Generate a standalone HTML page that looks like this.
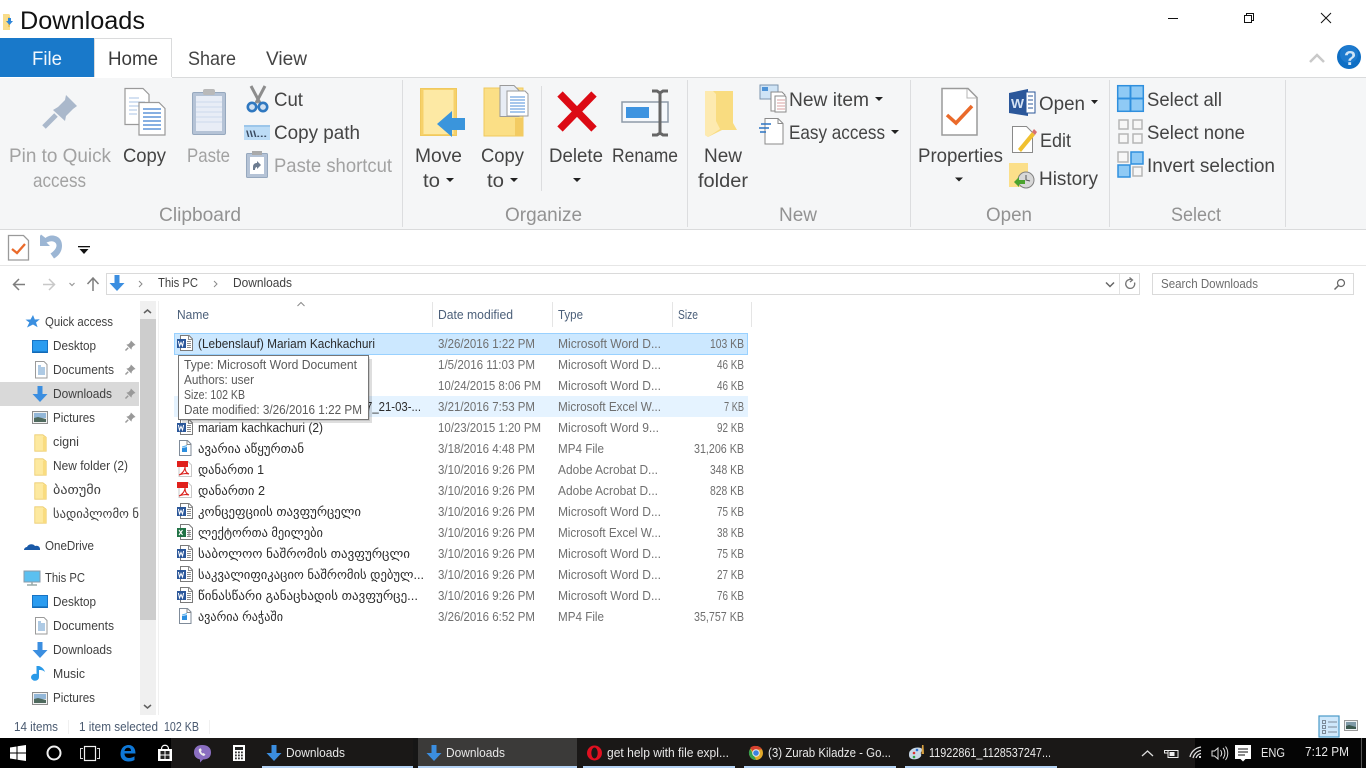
<!DOCTYPE html>
<html lang="en"><head><meta charset="utf-8"><title>Downloads</title>
<style>
html,body{margin:0;padding:0;background:#fff;overflow:hidden;width:1366px;height:768px}
svg{display:block;position:absolute;left:0;top:0}
text{font-family:"Liberation Sans","DejaVu Sans",sans-serif;white-space:pre}
.b{font-size:19.5px;fill:#444}
.d{font-size:19.5px;fill:#a2a2a2}
.g{font-size:19.5px;fill:#929292}
.s{font-size:12.5px;fill:#3f3f3f}
.n{font-size:12.5px;fill:#2c2c2c}
.m{font-size:12.5px;fill:#6f6f6f}
.h{font-size:12.5px;fill:#4c607a}
.t{font-size:12.5px;fill:#5a5a5a}
.w{font-size:12.5px;fill:#e8e8e8}
.st{font-size:12.5px;fill:#4a5a70}
</style></head><body>
<svg width="1366" height="768" viewBox="0 0 1366 768" xmlns="http://www.w3.org/2000/svg">
<defs>
<symbol id="word" viewBox="0 0 18 18" overflow="visible"><path d="M4.500 1.500H13l3.500 3.500v11.500h-12z" fill="#fff" stroke="#7a7a7a"/><path d="M12.500 1.500V5.500h4" fill="none" stroke="#8a8a8a"/><path d="M11 7.500h4M11 9.500h4M11 11.500h4M11 13.500h4" stroke="#8d8d8d"/><rect x="1" y="5" width="9" height="9" fill="#2b579a"/><path d="M2.400 7l1.100 5 1.500-3.600L6.500 12l1.100-5" fill="none" stroke="#fff" stroke-width="1"/></symbol>
<symbol id="excel" viewBox="0 0 18 18" overflow="visible"><path d="M4.500 1.500H13l3.500 3.500v11.500h-12z" fill="#fff" stroke="#7a7a7a"/><path d="M11 7.500h4M11 9.500h4M11 11.500h4M11 13.500h4M13 7v7" stroke="#8d8d8d"/><rect x="1" y="5" width="9" height="9" fill="#217346"/><path d="M3 7l3.500 5M6.500 7L3 12" stroke="#fff" stroke-width="1.100"/></symbol>
<symbol id="mp4" viewBox="0 0 18 18" overflow="visible"><path d="M3.500 1.500H11.500l3.500 3.500v11.500H3.500z" fill="#fff" stroke="#7f8b99"/><path d="M11 1.500V5.500h4" fill="none" stroke="#8a8a8a"/><path d="M6 9l5-1v5H6z" fill="#2c8fe0"/><path d="M6 7.500l5-1.500v1.200L6 8.500z" fill="#5ab0ee"/></symbol>
<symbol id="pdf" viewBox="0 0 18 18" overflow="visible"><path d="M3 1.500H12l3.500 3.500v11.500H3z" fill="#fff" stroke="#c8c8c8"/><rect x="1" y="1" width="11" height="6" fill="#e0201c"/><path d="M9 7c0 3-3 7-6 8 3-1 6-2 10-1-3-1-4-4-4-7z" fill="none" stroke="#d9201c" stroke-width="1.100"/></symbol>
<symbol id="folder" viewBox="0 0 18 22" overflow="visible"><path d="M2 1H12l4 3v17H2z" fill="#fde9a0" stroke="#eccb6c" stroke-width="1"/><path d="M12 3l4 1v17h-4z" fill="#f9dc80"/></symbol>
<symbol id="desk" viewBox="0 0 16 14" overflow="visible"><rect x=".5" y=".5" width="15" height="12" fill="#2a9cf0" stroke="#1773c4"/><path d="M1 11.500h14v1H1z" fill="#0c5fa8"/></symbol>
<symbol id="docs" viewBox="0 0 16 18" overflow="visible"><path d="M2.500 .5H11l3 3V17H2.500z" fill="#fff" stroke="#9a9a9a"/><path d="M5 5h3M5 7h7M5 9h7M5 11h7M5 13h7" stroke="#5d95c8"/></symbol>
<symbol id="dl" viewBox="0 0 16 16" overflow="visible"><path d="M5.500 0h5v8h5L8 16 .5 8h5z" fill="#3b8ee0"/></symbol>
<symbol id="pics" viewBox="0 0 16 14" overflow="visible"><rect x=".5" y=".5" width="15" height="12" fill="#f2f2f2" stroke="#8d8d8d"/><rect x="2" y="2" width="12" height="5" fill="#93b7d8"/><path d="M2 7l4-1 8 2v3H2z" fill="#4f6a5e"/></symbol>
<symbol id="pin" viewBox="0 0 12 12" overflow="visible"><path d="M6.500 .5l5 5-2 .7-2 2-.5 2.300L1.500 5l2.300-.5 2-2z" fill="#999"/><path d="M3.500 8.500L.5 11.500" stroke="#999" stroke-width="1.600"/></symbol>
</defs>

<!-- title bar -->
<rect width="1366" height="768" fill="#fff"/>
<g><path d="M3 14h6l1 1v15H3z" fill="#f8dc8a"/><path d="M8 17h2v10H8z" fill="#f0c65a"/><path d="M8 18h3v3h2l-3.500 4L6 21h2z" fill="#2f86d8"/></g>
<text x="20" y="29" font-size="25" fill="#111" textLength="125" lengthAdjust="spacingAndGlyphs">Downloads</text>
<path d="M1168 18.500h10" stroke="#111" stroke-width="1"/>
<path d="M1244.500 15.500h7v7h-7zM1246.500 15V13.500h7v7H1252" fill="none" stroke="#111"/>
<path d="M1321 13l10 10M1331 13l-10 10" stroke="#111" stroke-width="1"/>

<!-- tabs -->
<rect x="0" y="38" width="94" height="39" fill="#1979ca"/>
<path d="M94.500 77V38.500h77V77" fill="#fff" stroke="#dadbdc"/>
<text x="32" y="65" font-size="19.500" fill="#f2f7fc" textLength="30" lengthAdjust="spacingAndGlyphs">File</text>
<text x="108" y="65" font-size="19.500" fill="#3b3b3b" textLength="50" lengthAdjust="spacingAndGlyphs">Home</text>
<text x="188" y="65" font-size="19.500" fill="#444" textLength="48" lengthAdjust="spacingAndGlyphs">Share</text>
<text x="266" y="65" font-size="19.500" fill="#444" textLength="41" lengthAdjust="spacingAndGlyphs">View</text>
<path d="M1310 62l7-7 7 7" fill="none" stroke="#c9c9c9" stroke-width="2.500"/>
<circle cx="1349" cy="57" r="12" fill="#0e6ec4"/><circle cx="1349" cy="54" r="9" fill="#2b86d8" opacity=".5"/>
<text x="1344" y="65" font-size="20" font-weight="bold" fill="#cfe4f6">?</text>

<!-- ribbon -->
<rect x="0" y="78" width="1366" height="151" fill="#f5f6f7"/>
<rect x="172" y="77" width="1194" height="1" fill="#dadbdc"/>
<rect x="0" y="229" width="1366" height="1" fill="#dadbdc"/>
<g fill="#dcdddf"><rect x="402" y="80" width="1" height="147"/><rect x="687" y="80" width="1" height="147"/><rect x="910" y="80" width="1" height="147"/><rect x="1109" y="80" width="1" height="147"/><rect x="1285" y="80" width="1" height="147"/><rect x="541" y="86" width="1" height="105"/></g>

<!-- clipboard icons -->
<g><path d="M66 95l11 11-4 3-7 7-1 5-12-11 5-3 7-7z" fill="#aab8cb"/><path d="M56 115L44 127" stroke="#aab8cb" stroke-width="5"/></g>
<g><path d="M125 88.500h18l6 6v30h-24z" fill="#fff" stroke="#9a9a9a" stroke-width="1.200"/><path d="M129 98h10M129 102h16M129 106h16M129 110h8M129 114h8" stroke="#a9c3e4"/>
<path d="M139 102.500h20l6 6V135h-26z" fill="#fff" stroke="#9a9a9a" stroke-width="1.200"/><path d="M143 109h18M143 113h18M143 117h18M143 121h18M143 125h18M143 129h18" stroke="#3f7fd0" stroke-width="1.300"/></g>
<g><rect x="192.500" y="92.500" width="33" height="42" rx="1.500" fill="#b5c3d6" stroke="#96a8be"/><rect x="196" y="96" width="26" height="35" fill="#e8edf6"/><path d="M196 102h26M196 107h26M196 112h26M196 117h26M196 122h26" stroke="#cdd9ec"/><rect x="203" y="89" width="12" height="6" rx="2" fill="#b9b9b9"/></g>
<g><path d="M251 86l9 17M265 86l-9 17" stroke="#8d8d8d" stroke-width="3"/><circle cx="252" cy="107" r="4.200" fill="#cfe0f2" stroke="#2f78c0" stroke-width="2.600"/><circle cx="263" cy="107" r="4.200" fill="#cfe0f2" stroke="#2f78c0" stroke-width="2.600"/></g>
<rect x="244" y="125" width="26" height="15" fill="#bcdcf6"/><rect x="244" y="125" width="26" height="2" fill="#9cc6ea"/><text x="246" y="137" font-size="9" font-weight="bold" fill="#3a4a60" textLength="21" lengthAdjust="spacingAndGlyphs">\\\...</text>
<g><rect x="246.500" y="153.500" width="21" height="24" rx="1" fill="#b5c3d6" stroke="#96a8be"/><rect x="250" y="157" width="14" height="17" fill="#fff"/><rect x="252" y="151" width="10" height="4" fill="#aaa"/><path d="M253 170v-3c0-3 2-4 4-4v-2l4 4-4 4v-2c-1 0-2 1-2 3z" fill="#6d7c90"/></g>

<text class="d" x="9" y="162" textLength="102" lengthAdjust="spacingAndGlyphs">Pin to Quick</text>
<text class="d" x="33" y="187" textLength="53" lengthAdjust="spacingAndGlyphs">access</text>
<text class="b" x="123" y="162" textLength="43" lengthAdjust="spacingAndGlyphs">Copy</text>
<text class="d" x="187" y="162" textLength="43" lengthAdjust="spacingAndGlyphs">Paste</text>
<text class="b" x="274" y="106" textLength="29" lengthAdjust="spacingAndGlyphs">Cut</text>
<text class="b" x="274" y="139" textLength="86" lengthAdjust="spacingAndGlyphs">Copy path</text>
<text class="d" x="274" y="172" textLength="118" lengthAdjust="spacingAndGlyphs">Paste shortcut</text>
<text class="g" x="159" y="221" textLength="82" lengthAdjust="spacingAndGlyphs">Clipboard</text>

<!-- organize -->
<g><rect x="420.500" y="88.500" width="36" height="47" fill="#f6d16a" stroke="#f0c95e" stroke-width="1"/><rect x="423.500" y="90" width="30" height="44" fill="#fde9a4"/><path d="M465 118h-13v-7l-15 13 15 13v-7h13z" fill="#3a95dc"/></g>
<g><rect x="484" y="88" width="39" height="48" fill="#fbdf86" stroke="#f0c95e" stroke-width="1"/><rect x="515" y="118" width="8" height="18" fill="#f3cb62"/><path d="M500 85.500h14l5 5v26h-19z" fill="#e8edf5" stroke="#9a9a9a"/><path d="M507 91h18l3 3v22h-21z" fill="#fff" stroke="#9a9a9a"/><path d="M510 97h15M510 100h15M510 103h15M510 106h15M510 109h15M510 112h15" stroke="#4f8fd8"/></g>
<path d="M560 94l34 35M594 94l-34 35" stroke="#dc0a14" stroke-width="7.500"/>
<g><rect x="622" y="102" width="46" height="20" fill="#f5f8fc" stroke="#8e9aa8" stroke-width="1.500"/><rect x="626" y="107" width="23" height="11" fill="#3d93e0"/><path d="M652 91h5l3 2 3-2h5M660 93v40M652 135h5l3-2 3 2h5" fill="none" stroke="#666" stroke-width="3"/></g>
<text class="b" x="415" y="162" textLength="47" lengthAdjust="spacingAndGlyphs">Move</text>
<text class="b" x="423" y="187" textLength="17" lengthAdjust="spacingAndGlyphs">to</text>
<path d="M446 178h8l-4 4z" fill="#222"/>
<text class="b" x="481" y="162" textLength="43" lengthAdjust="spacingAndGlyphs">Copy</text>
<text class="b" x="487" y="187" textLength="17" lengthAdjust="spacingAndGlyphs">to</text>
<path d="M510 178h8l-4 4z" fill="#222"/>
<text class="b" x="549" y="162" textLength="54" lengthAdjust="spacingAndGlyphs">Delete</text>
<path d="M573 178h8l-4 4z" fill="#222"/>
<text class="b" x="612" y="162" textLength="66" lengthAdjust="spacingAndGlyphs">Rename</text>
<text class="g" x="505" y="221" textLength="77" lengthAdjust="spacingAndGlyphs">Organize</text>

<!-- new -->
<g><path d="M705 91h28v32l4 7H722l-14 7-3-2z" fill="#f9dc80"/><path d="M705 91h8l3 3v27l4 8-12 8-3-2z" fill="#fdeab0"/></g>
<g><rect x="760" y="85" width="18" height="14" fill="#cfe4f6" stroke="#7c94ad"/><rect x="762" y="87" width="6" height="4" fill="#4f93d6"/><path d="M771 92h11l3 3v16h-14z" fill="#fff" stroke="#8a8a8a"/><path d="M775 96h10l1 1v15h-11z" fill="#fff" stroke="#8a8a8a"/><path d="M777 100h8M777 103h8M777 106h8M777 109h8" stroke="#d8a0a0"/></g>
<g><path d="M765 118.500h13l5 5V144h-18z" fill="#fff" stroke="#8a8a8a"/><path d="M778 118.500v5h5" fill="none" stroke="#8a8a8a"/><path d="M761 124h10M759 128h10M760 132h6" stroke="#2b74c4" stroke-width="1.500"/></g>
<text class="b" x="704" y="162" textLength="38" lengthAdjust="spacingAndGlyphs">New</text>
<text class="b" x="698" y="187" textLength="50" lengthAdjust="spacingAndGlyphs">folder</text>
<text class="b" x="789" y="106" textLength="80" lengthAdjust="spacingAndGlyphs">New item</text>
<path d="M875 97h8l-4 4z" fill="#222"/>
<text class="b" x="789" y="139" textLength="96" lengthAdjust="spacingAndGlyphs">Easy access</text>
<path d="M891 130h8l-4 4z" fill="#222"/>
<text class="g" x="779" y="221" textLength="38" lengthAdjust="spacingAndGlyphs">New</text>

<!-- open -->
<g><path d="M942 88.500h26l9 9V135h-35z" fill="#fff" stroke="#9a9a9a" stroke-width="1.500"/><path d="M967 89v9h9" fill="none" stroke="#b5b5b5"/><path d="M947 115l9 8 16-17" fill="none" stroke="#ea6a2a" stroke-width="3.500"/></g>
<g><path d="M1009 93l19-4v27l-19-3z" fill="#2b579a"/><rect x="1026" y="92" width="9" height="21" fill="#fff" stroke="#2b579a"/><path d="M1028 96h5M1028 100h5M1028 104h5M1028 108h5" stroke="#2b579a"/><text x="1011" y="108" font-size="13" font-weight="bold" fill="#d4e2f4" textLength="13" lengthAdjust="spacingAndGlyphs">W</text></g>
<g><path d="M1012.500 126.500h14l6 6v20h-20z" fill="#fff" stroke="#8a8a8a"/><path d="M1018 149l14-17 3 3-14 17z" fill="#f0c030"/><path d="M1032 132l2-3 3 3-2 3z" fill="#d87070"/></g>
<g><rect x="1009" y="163" width="19" height="24" fill="#fbdf8a"/><circle cx="1026" cy="180" r="8" fill="#d8d8d8" stroke="#808080"/><path d="M1026 175v5l4 1" fill="none" stroke="#555"/><path d="M1014 182l5-5v3h6v4h-6v3z" fill="#4aa32e"/></g>
<text class="b" x="918" y="162" textLength="85" lengthAdjust="spacingAndGlyphs">Properties</text>
<path d="M955 177.500h8l-4 4z" fill="#222"/>
<text class="b" x="1039" y="110" textLength="46" lengthAdjust="spacingAndGlyphs">Open</text>
<path d="M1091 100h7l-3.500 4z" fill="#222"/>
<text class="b" x="1040" y="147" textLength="31" lengthAdjust="spacingAndGlyphs">Edit</text>
<text class="b" x="1039" y="185" textLength="59" lengthAdjust="spacingAndGlyphs">History</text>
<text class="g" x="986" y="221" textLength="46" lengthAdjust="spacingAndGlyphs">Open</text>

<!-- select -->
<g fill="#8fcaf5" stroke="#2f8fde" stroke-width="1.500"><rect x="1117.700" y="85.700" width="12.600" height="12.600"/><rect x="1130.700" y="85.700" width="12.600" height="12.600"/><rect x="1117.700" y="98.700" width="12.600" height="12.600"/><rect x="1130.700" y="98.700" width="12.600" height="12.600"/></g>
<g fill="#f7f7f7" stroke="#b5b5b5" stroke-width="1.500"><rect x="1119" y="120" width="9" height="9"/><rect x="1133" y="120" width="9" height="9"/><rect x="1119" y="134" width="9" height="9"/><rect x="1133" y="134" width="9" height="9"/></g>
<g stroke-width="1.500"><rect x="1118" y="152" width="10" height="10" fill="#f7f7f7" stroke="#b5b5b5"/><rect x="1131" y="152" width="12" height="12" fill="#8fcaf5" stroke="#2f8fde"/><rect x="1118" y="165" width="12" height="12" fill="#8fcaf5" stroke="#2f8fde"/><rect x="1133" y="167" width="9" height="9" fill="#f7f7f7" stroke="#b5b5b5"/></g>
<text class="b" x="1147" y="106" textLength="75" lengthAdjust="spacingAndGlyphs">Select all</text>
<text class="b" x="1147" y="139" textLength="98" lengthAdjust="spacingAndGlyphs">Select none</text>
<text class="b" x="1147" y="172" textLength="128" lengthAdjust="spacingAndGlyphs">Invert selection</text>
<text class="g" x="1171" y="221" textLength="50" lengthAdjust="spacingAndGlyphs">Select</text>

<!-- QAT -->
<g><path d="M8.500 235.500h15l5 5V260h-20z" fill="#fff" stroke="#9a9a9a" stroke-width="1.300"/><path d="M12 249l5 4 8-9" fill="none" stroke="#ea6a2a" stroke-width="2.300"/></g>
<path d="M40 236v10h10l-3.500-3.500 3-1c4-1 7 1 7 4 0 3-3 6-6 8l3.500 5c5-3 8-7 8-13 0-7-5-10-10-10-2.500 0-5 1-6.500 2.500L41 234.500z" fill="#9cb6d4"/>
<rect x="78" y="246" width="12" height="1.300" fill="#111"/><path d="M79.500 249h9l-4.500 5z" fill="#111"/>
<rect x="0" y="265" width="1366" height="1" fill="#e6e6e6"/>

<!-- address bar -->
<path d="M25 284.500H14M19 279l-5.500 5.500 5.500 5.500" fill="none" stroke="#7e7e7e" stroke-width="1.500"/>
<path d="M43 284.500h12M49 279l5.500 5.500-5.500 5.500" fill="none" stroke="#c8c8c8" stroke-width="1.500"/>
<path d="M69.500 283l2.500 2.500 2.500-2.500" fill="none" stroke="#999" stroke-width="1.200"/>
<path d="M93 291V278M87.500 284l5.500-6 5.500 6" fill="none" stroke="#7e7e7e" stroke-width="1.500"/>
<rect x="106.500" y="273.500" width="1033" height="21" fill="#fff" stroke="#dadada"/>
<rect x="1119" y="274" width="1" height="20" fill="#e3e3e3"/>
<use href="#dl" x="109" y="275" width="16" height="16"/>
<path d="M139 281l3 3-3 3" fill="none" stroke="#8a8a8a"/><path d="M214 281l3 3-3 3" fill="none" stroke="#8a8a8a"/>
<text class="s" x="158" y="287" textLength="40" lengthAdjust="spacingAndGlyphs">This PC</text>
<text class="s" x="233" y="287" textLength="59" lengthAdjust="spacingAndGlyphs">Downloads</text>
<path d="M1106 282.500l4 4 4-4" fill="none" stroke="#666" stroke-width="1.500"/>
<path d="M1134.500 282.500a4.500 4.500 0 1 1-2-2.500M1129.500 277.500l3 2.500-2.500 2" fill="none" stroke="#777" stroke-width="1.300"/>
<rect x="1152.500" y="273.500" width="201" height="21" fill="#fff" stroke="#dadada"/>
<text x="1161" y="288" font-size="12.500" fill="#6d6d6d" textLength="97" lengthAdjust="spacingAndGlyphs">Search Downloads</text>
<circle cx="1341" cy="283" r="3.500" fill="none" stroke="#666" stroke-width="1.200"/><path d="M1338.500 285.500l-4 4" stroke="#666" stroke-width="1.500"/>

<!-- sidebar -->
<rect x="0" y="382" width="139" height="24" fill="#d9d9d9"/>
<rect x="140" y="301" width="16" height="414" fill="#f0f0f0"/><rect x="140" y="319" width="16" height="301" fill="#cdcdcd"/>
<path d="M144 313l3.500-3 3.500 3" fill="none" stroke="#606060" stroke-width="1.500"/><path d="M144 705l3.500 3 3.500-3" fill="none" stroke="#606060" stroke-width="1.500"/>
<rect x="158" y="301" width="1" height="414" fill="#f0f0f0"/>
<path d="M33 315l1.800 4.500 5-.3-3.800 3.300 1.600 4.700-4.600-2.700-6 3 2.300-5-3.800-2.900 5-.1z" fill="#3a8fe0"/>
<use href="#desk" x="32" y="340" width="16" height="14"/>
<use href="#docs" x="33" y="361" width="16" height="18"/>
<use href="#dl" x="32" y="386" width="16" height="16"/>
<use href="#pics" x="32" y="411" width="16" height="14"/>
<use href="#pin" x="125" y="340" width="11" height="11"/>
<use href="#pin" x="125" y="364" width="11" height="11"/>
<use href="#pin" x="125" y="388" width="11" height="11"/>
<use href="#pin" x="125" y="412" width="11" height="11"/>
<use href="#folder" x="33" y="434" width="15" height="18"/>
<use href="#folder" x="33" y="458" width="15" height="18"/>
<use href="#folder" x="33" y="482" width="15" height="18"/>
<use href="#folder" x="33" y="506" width="15" height="18"/>
<path d="M24 550c0-2 2-3 3-3 1-3 6-4 8-1 3-1 5 1 5 3v1z" fill="#1a5aa8"/>
<rect x="24" y="571" width="16" height="11" fill="#5cc0f0" stroke="#8a9aa8"/><path d="M32 582v3M27 585h10" stroke="#9aa" stroke-width="1.500"/>
<use href="#desk" x="32" y="595" width="16" height="14"/>
<use href="#docs" x="33" y="617" width="16" height="18"/>
<use href="#dl" x="32" y="642" width="16" height="16"/>
<path d="M39 666v11a4 3.500 0 1 1-2.500-3v-8zM39 666c3 1 5 3 6 6-2-2-4-2-6-2z" fill="#2a9ae8"/>
<use href="#pics" x="32" y="692" width="16" height="14"/>
<text class="s" x="45" y="326" textLength="68" lengthAdjust="spacingAndGlyphs">Quick access</text>
<text class="s" x="53" y="350" textLength="43" lengthAdjust="spacingAndGlyphs">Desktop</text>
<text class="s" x="53" y="374" textLength="61" lengthAdjust="spacingAndGlyphs">Documents</text>
<text class="s" x="53" y="398" textLength="59" lengthAdjust="spacingAndGlyphs">Downloads</text>
<text class="s" x="53" y="422" textLength="42" lengthAdjust="spacingAndGlyphs">Pictures</text>
<text class="s" x="53" y="446" textLength="26" lengthAdjust="spacingAndGlyphs">cigni</text>
<text class="s" x="53" y="470" textLength="75" lengthAdjust="spacingAndGlyphs">New folder (2)</text>
<text class="s" x="53" y="494" textLength="48" lengthAdjust="spacingAndGlyphs">ბათუმი</text>
<text class="s" x="53" y="518" textLength="86" lengthAdjust="spacingAndGlyphs">სადიპლომო ნ</text>
<text class="s" x="45" y="550" textLength="49" lengthAdjust="spacingAndGlyphs">OneDrive</text>
<text class="s" x="45" y="582" textLength="40" lengthAdjust="spacingAndGlyphs">This PC</text>
<text class="s" x="53" y="606" textLength="43" lengthAdjust="spacingAndGlyphs">Desktop</text>
<text class="s" x="53" y="630" textLength="61" lengthAdjust="spacingAndGlyphs">Documents</text>
<text class="s" x="53" y="654" textLength="59" lengthAdjust="spacingAndGlyphs">Downloads</text>
<text class="s" x="53" y="678" textLength="32" lengthAdjust="spacingAndGlyphs">Music</text>
<text class="s" x="53" y="702" textLength="42" lengthAdjust="spacingAndGlyphs">Pictures</text>

<!-- headers -->
<g fill="#e5e5e5"><rect x="432" y="302" width="1" height="25"/><rect x="552" y="302" width="1" height="25"/><rect x="672" y="302" width="1" height="25"/><rect x="751" y="302" width="1" height="25"/></g>
<path d="M297.500 306l3.500-3.500 3.500 3.500" fill="none" stroke="#8a8a8a"/>
<text class="h" x="177" y="319" textLength="32" lengthAdjust="spacingAndGlyphs">Name</text>
<text class="h" x="438" y="319" textLength="75" lengthAdjust="spacingAndGlyphs">Date modified</text>
<text class="h" x="558" y="319" textLength="25" lengthAdjust="spacingAndGlyphs">Type</text>
<text class="h" x="678" y="319" textLength="20" lengthAdjust="spacingAndGlyphs">Size</text>

<!-- rows -->
<rect x="174.500" y="333.500" width="573" height="21" fill="#cce8ff" stroke="#99d1ff"/>
<rect x="174" y="396" width="574" height="21" fill="#e5f3ff"/>
<use href="#word" x="176" y="334" width="18" height="18"/>
<use href="#word" x="176" y="418" width="18" height="18"/>
<use href="#mp4" x="176" y="439" width="18" height="18"/>
<use href="#pdf" x="176" y="460" width="18" height="18"/>
<use href="#pdf" x="176" y="481" width="18" height="18"/>
<use href="#word" x="176" y="502" width="18" height="18"/>
<use href="#excel" x="176" y="523" width="18" height="18"/>
<use href="#word" x="176" y="544" width="18" height="18"/>
<use href="#word" x="176" y="565" width="18" height="18"/>
<use href="#word" x="176" y="586" width="18" height="18"/>
<use href="#mp4" x="176" y="607" width="18" height="18"/>

<text class="n" x="198" y="348" textLength="177" lengthAdjust="spacingAndGlyphs">(Lebenslauf) Mariam Kachkachuri</text>
<text class="n" x="366" y="411" textLength="55" lengthAdjust="spacingAndGlyphs">7_21-03-...</text>
<text class="n" x="198" y="432" textLength="125" lengthAdjust="spacingAndGlyphs">mariam kachkachuri (2)</text>
<text class="n" x="198" y="453" textLength="106" lengthAdjust="spacingAndGlyphs">ავარია აწყურთან</text>
<text class="n" x="198" y="474" textLength="66" lengthAdjust="spacingAndGlyphs">დანართი 1</text>
<text class="n" x="198" y="495" textLength="67" lengthAdjust="spacingAndGlyphs">დანართი 2</text>
<text class="n" x="198" y="516" textLength="163" lengthAdjust="spacingAndGlyphs">კონცეფციის თავფურცელი</text>
<text class="n" x="198" y="537" textLength="125" lengthAdjust="spacingAndGlyphs">ლექტორთა მეილები</text>
<text class="n" x="198" y="558" textLength="212" lengthAdjust="spacingAndGlyphs">საბოლოო ნაშრომის თავფურცლი</text>
<text class="n" x="198" y="579" textLength="226" lengthAdjust="spacingAndGlyphs">საკვალიფიკაციო ნაშრომის დებულ...</text>
<text class="n" x="198" y="600" textLength="220" lengthAdjust="spacingAndGlyphs">წინასწარი განაცხადის თავფურცე...</text>
<text class="n" x="198" y="621" textLength="85" lengthAdjust="spacingAndGlyphs">ავარია რაჭაში</text>

<g>
<text class="m" x="438" y="348" textLength="97" lengthAdjust="spacingAndGlyphs">3/26/2016 1:22 PM</text>
<text class="m" x="438" y="369" textLength="97" lengthAdjust="spacingAndGlyphs">1/5/2016 11:03 PM</text>
<text class="m" x="438" y="390" textLength="103" lengthAdjust="spacingAndGlyphs">10/24/2015 8:06 PM</text>
<text class="m" x="438" y="411" textLength="97" lengthAdjust="spacingAndGlyphs">3/21/2016 7:53 PM</text>
<text class="m" x="438" y="432" textLength="103" lengthAdjust="spacingAndGlyphs">10/23/2015 1:20 PM</text>
<text class="m" x="438" y="453" textLength="97" lengthAdjust="spacingAndGlyphs">3/18/2016 4:48 PM</text>
<text class="m" x="438" y="474" textLength="97" lengthAdjust="spacingAndGlyphs">3/10/2016 9:26 PM</text>
<text class="m" x="438" y="495" textLength="97" lengthAdjust="spacingAndGlyphs">3/10/2016 9:26 PM</text>
<text class="m" x="438" y="516" textLength="97" lengthAdjust="spacingAndGlyphs">3/10/2016 9:26 PM</text>
<text class="m" x="438" y="537" textLength="97" lengthAdjust="spacingAndGlyphs">3/10/2016 9:26 PM</text>
<text class="m" x="438" y="558" textLength="97" lengthAdjust="spacingAndGlyphs">3/10/2016 9:26 PM</text>
<text class="m" x="438" y="579" textLength="97" lengthAdjust="spacingAndGlyphs">3/10/2016 9:26 PM</text>
<text class="m" x="438" y="600" textLength="97" lengthAdjust="spacingAndGlyphs">3/10/2016 9:26 PM</text>
<text class="m" x="438" y="621" textLength="97" lengthAdjust="spacingAndGlyphs">3/26/2016 6:52 PM</text>

<text class="m" x="558" y="348" textLength="103" lengthAdjust="spacingAndGlyphs">Microsoft Word D...</text>
<text class="m" x="558" y="369" textLength="103" lengthAdjust="spacingAndGlyphs">Microsoft Word D...</text>
<text class="m" x="558" y="390" textLength="103" lengthAdjust="spacingAndGlyphs">Microsoft Word D...</text>
<text class="m" x="558" y="411" textLength="103" lengthAdjust="spacingAndGlyphs">Microsoft Excel W...</text>
<text class="m" x="558" y="432" textLength="101" lengthAdjust="spacingAndGlyphs">Microsoft Word 9...</text>
<text class="m" x="558" y="453" textLength="46" lengthAdjust="spacingAndGlyphs">MP4 File</text>
<text class="m" x="558" y="474" textLength="100" lengthAdjust="spacingAndGlyphs">Adobe Acrobat D...</text>
<text class="m" x="558" y="495" textLength="100" lengthAdjust="spacingAndGlyphs">Adobe Acrobat D...</text>
<text class="m" x="558" y="516" textLength="103" lengthAdjust="spacingAndGlyphs">Microsoft Word D...</text>
<text class="m" x="558" y="537" textLength="103" lengthAdjust="spacingAndGlyphs">Microsoft Excel W...</text>
<text class="m" x="558" y="558" textLength="103" lengthAdjust="spacingAndGlyphs">Microsoft Word D...</text>
<text class="m" x="558" y="579" textLength="103" lengthAdjust="spacingAndGlyphs">Microsoft Word D...</text>
<text class="m" x="558" y="600" textLength="103" lengthAdjust="spacingAndGlyphs">Microsoft Word D...</text>
<text class="m" x="558" y="621" textLength="46" lengthAdjust="spacingAndGlyphs">MP4 File</text>

<text class="m" x="710" y="348" textLength="34" lengthAdjust="spacingAndGlyphs">103 KB</text>
<text class="m" x="717" y="369" textLength="27" lengthAdjust="spacingAndGlyphs">46 KB</text>
<text class="m" x="717" y="390" textLength="27" lengthAdjust="spacingAndGlyphs">46 KB</text>
<text class="m" x="724" y="411" textLength="20" lengthAdjust="spacingAndGlyphs">7 KB</text>
<text class="m" x="717" y="432" textLength="27" lengthAdjust="spacingAndGlyphs">92 KB</text>
<text class="m" x="694" y="453" textLength="50" lengthAdjust="spacingAndGlyphs">31,206 KB</text>
<text class="m" x="710" y="474" textLength="34" lengthAdjust="spacingAndGlyphs">348 KB</text>
<text class="m" x="710" y="495" textLength="34" lengthAdjust="spacingAndGlyphs">828 KB</text>
<text class="m" x="717" y="516" textLength="27" lengthAdjust="spacingAndGlyphs">75 KB</text>
<text class="m" x="717" y="537" textLength="27" lengthAdjust="spacingAndGlyphs">38 KB</text>
<text class="m" x="717" y="558" textLength="27" lengthAdjust="spacingAndGlyphs">75 KB</text>
<text class="m" x="717" y="579" textLength="27" lengthAdjust="spacingAndGlyphs">27 KB</text>
<text class="m" x="717" y="600" textLength="27" lengthAdjust="spacingAndGlyphs">76 KB</text>
<text class="m" x="694" y="621" textLength="50" lengthAdjust="spacingAndGlyphs">35,757 KB</text>
</g>

<!-- tooltip -->
<rect x="182" y="359" width="190" height="64" fill="#000" opacity=".13"/>
<rect x="180" y="357" width="190" height="64" fill="#000" opacity=".1"/>
<rect x="178.500" y="355.500" width="190" height="64" fill="#fff" stroke="#767676"/>
<text class="t" x="184" y="369" textLength="173" lengthAdjust="spacingAndGlyphs">Type: Microsoft Word Document</text>
<text class="t" x="184" y="384" textLength="70" lengthAdjust="spacingAndGlyphs">Authors: user</text>
<text class="t" x="184" y="399" textLength="61" lengthAdjust="spacingAndGlyphs">Size: 102 KB</text>
<text class="t" x="184" y="414" textLength="178" lengthAdjust="spacingAndGlyphs">Date modified: 3/26/2016 1:22 PM</text>

<!-- status -->
<text class="st" x="14" y="731" textLength="44" lengthAdjust="spacingAndGlyphs">14 items</text>
<rect x="68" y="720" width="1" height="14" fill="#f0f0f0"/>
<text class="st" x="79" y="731" textLength="79" lengthAdjust="spacingAndGlyphs">1 item selected</text>
<text class="st" x="164" y="731" textLength="35" lengthAdjust="spacingAndGlyphs">102 KB</text>
<rect x="209" y="720" width="1" height="14" fill="#f0f0f0"/>
<rect x="1319" y="716" width="20" height="21" fill="#cfe8fb" stroke="#4a9ac8" stroke-width="1.200"/>
<g fill="none" stroke="#7c8a98"><rect x="1322.500" y="720.500" width="3" height="3"/><rect x="1322.500" y="725.500" width="3" height="3"/><rect x="1322.500" y="730.500" width="3" height="3"/><path d="M1328 722h9M1328 727h9M1328 732h9"/></g>
<rect x="1344.500" y="720.500" width="13" height="10" fill="#eef2f5" stroke="#9a9a9a"/><rect x="1346" y="722" width="10" height="7" fill="#7f9aa8"/><path d="M1346 726l3-1 7 2v2h-10z" fill="#3d5a50"/>

<!-- taskbar -->
<rect x="0" y="738" width="1366" height="30" fill="#1a1817"/>
<rect x="0" y="738" width="171" height="30" fill="#000"/>
<rect x="413" y="738" width="5" height="30" fill="#161616"/>
<rect x="1195" y="738" width="171" height="30" fill="#050505"/>
<rect x="418" y="738" width="159" height="30" fill="#3b3a39"/>
<rect x="262" y="766" width="151" height="2" fill="#b4d2f4"/>
<rect x="418" y="766" width="159" height="2" fill="#b4d2f4"/>
<rect x="583" y="766" width="152" height="2" fill="#b4d2f4"/>
<rect x="744" y="766" width="152" height="2" fill="#b4d2f4"/>
<rect x="905" y="766" width="152" height="2" fill="#b4d2f4"/>
<path d="M10 747.500l6.500-1v6h-6.500zM17.500 746.300l8.500-1.300v7.500h-8.500zM10 753.500h6.500v6l-6.500-1zM17.500 753.500H26V761l-8.500-1.300z" fill="#fff"/>
<circle cx="54" cy="753" r="6.500" fill="none" stroke="#f0f0f0" stroke-width="2"/>
<rect x="84.500" y="746.500" width="11" height="14" fill="none" stroke="#f0f0f0" stroke-width="1.200"/><path d="M83 748.500h-2.500v10H83M97 748.500h2.500v10H97" fill="none" stroke="#d8d8d8"/>
<path d="M120.500 754c0-6 4-9 8-9 5 0 7 4 7 8.500h-11c0 3 2 4.500 4.500 4.500 2 0 4-.7 5.500-1.700v3.700c-1.500 1-3.500 1.500-6 1.500-5 0-8-3-8-7.500zm4-3h6.500c0-2-1-3.200-3-3.200s-3 1.200-3.500 3.200z" fill="#0e78d8"/>
<path d="M158 749h14v12h-14z" fill="#fff"/><path d="M161.500 749c0-5 7-5 7 0" fill="none" stroke="#fff" stroke-width="1.300"/><path d="M160.500 751h4v3.500h-4zM165.500 751h4v3.500h-4zM160.500 755.500h4v3.500h-4zM165.500 755.500h4v3.500h-4z" fill="#222"/>
<path d="M202 745c6 0 9 3 9 7.500s-3 7-8 7l-3 3v-3c-4-1-6-3.500-6-7 0-4.500 3-7.500 8-7.500z" fill="#8a6ec0"/><path d="M199 749c-1 2 1 6 5 7l1.500-1.500-2-1.500-1 .5c-.8-.7-1.300-1.500-1.500-2.500l.8-.7-1-2z" fill="#eee"/>
<rect x="233" y="745" width="12" height="16" fill="#fff"/><rect x="235" y="747" width="8" height="3" fill="#222"/><g fill="#333"><rect x="235" y="751.500" width="1.800" height="1.800"/><rect x="238" y="751.500" width="1.800" height="1.800"/><rect x="241" y="751.500" width="1.800" height="1.800"/><rect x="235" y="754.500" width="1.800" height="1.800"/><rect x="238" y="754.500" width="1.800" height="1.800"/><rect x="241" y="754.500" width="1.800" height="1.800"/><rect x="235" y="757.500" width="1.800" height="1.800"/><rect x="238" y="757.500" width="1.800" height="1.800"/><rect x="241" y="757.500" width="1.800" height="1.800"/></g>
<use href="#dl" x="266" y="745" width="16" height="16"/>
<use href="#dl" x="426" y="745" width="16" height="16"/>
<ellipse cx="594.500" cy="753" rx="7.500" ry="7.500" fill="#e01020"/><ellipse cx="594.500" cy="753" rx="3.200" ry="5.500" fill="#1a1817"/>
<circle cx="756" cy="753" r="7" fill="#e2a92a"/><path d="M756 746a7 7 0 0 1 6 3.500h-6a3.500 3.500 0 0 0-3.200 2l-2.500-3.700a7 7 0 0 1 5.700-1.800z" fill="#d6412f"/><path d="M750.200 749l3 5.500 3 5.400a7 7 0 0 1-6-11z" fill="#35a04e"/><circle cx="756" cy="753" r="3.300" fill="#3b82e0" stroke="#eee"/>
<path d="M912 749c3-2 9-2 10 0s-2 3-1 5-1 4-4 5c-4 1-8 0-8-4s1-4 3-6z" fill="#c8d8e8"/><circle cx="914" cy="753" r="1.300" fill="#d83030"/><circle cx="917" cy="750" r="1.300" fill="#3070d0"/><circle cx="914" cy="757" r="1.300" fill="#30a040"/><path d="M922 745l1.500 0 .5 9h-2.500z" fill="#d8a040"/>
<text class="w" x="286" y="757" textLength="59" lengthAdjust="spacingAndGlyphs">Downloads</text>
<text class="w" x="446" y="757" textLength="59" lengthAdjust="spacingAndGlyphs">Downloads</text>
<text class="w" x="607" y="757" textLength="122" lengthAdjust="spacingAndGlyphs">get help with file expl...</text>
<text class="w" x="768" y="757" textLength="123" lengthAdjust="spacingAndGlyphs">(3) Zurab Kiladze - Go...</text>
<text class="w" x="929" y="757" textLength="122" lengthAdjust="spacingAndGlyphs">11922861_1128537247...</text>
<path d="M1142 756l5.500-5 5.500 5" fill="none" stroke="#ddd" stroke-width="1.300"/>
<path d="M1164.500 750v3h3.500v-3M1165 750.500h2.500" fill="none" stroke="#eee"/><rect x="1168" y="750.500" width="10" height="7" fill="none" stroke="#eee"/><rect x="1169.500" y="752" width="5" height="4" fill="#eee"/>
<g fill="none" stroke="#ddd" stroke-width="1.300"><path d="M1190 757c1-5 5-9 11-10"/><path d="M1193 758c1-4 4-7 8-7.500"/><path d="M1196 758c.7-2 2.500-4 5-4.500"/></g><rect x="1199" y="756" width="2" height="2" fill="#ddd"/>
<path d="M1212 751h2.500l3.500-3v11l-3.500-3H1212zM1220.500 750c1.500 2 1.500 4.500 0 6.500M1223 748c2.500 3 2.500 7.500 0 10.500M1225.500 746.500c3 4 3 9.500 0 13.500" fill="none" stroke="#ddd" stroke-width="1"/>
<path d="M1235 745h16v14h-5.500l-2.500 2.500-2.500-2.500H1235z" fill="#fff"/><path d="M1238 749h10M1238 752h10M1238 755h7" stroke="#111" stroke-width="1"/>
<text class="w" x="1261" y="757" textLength="24" lengthAdjust="spacingAndGlyphs">ENG</text>
<text class="w" x="1305" y="756" textLength="44" lengthAdjust="spacingAndGlyphs">7:12 PM</text>
<rect x="1361" y="738" width="1" height="30" fill="#555"/>
</svg>
</body></html>
